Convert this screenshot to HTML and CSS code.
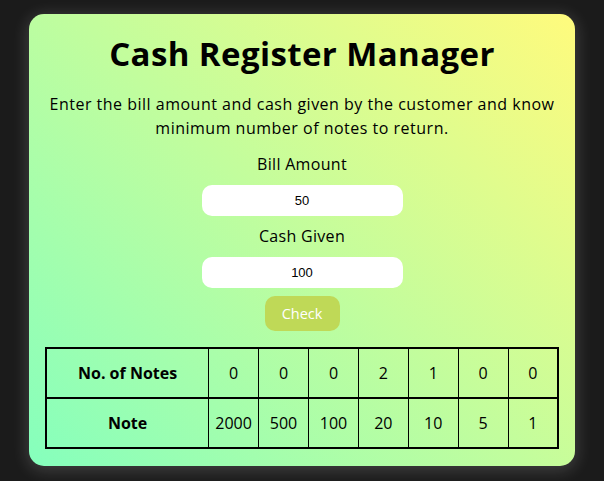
FILE: index.html
```html
<!DOCTYPE html>
<html lang="en">
<head>
<meta charset="utf-8">
<title>Cash Register Manager</title>
<link rel="stylesheet" href="styles.css">
</head>
<body>
<main class="card">
  <h1 class="title">Cash Register Manager</h1>
  <p class="intro">Enter the bill amount and cash given by the customer and know minimum number of notes to return.</p>
  <form class="form">
    <label class="label" for="bill">Bill Amount</label>
    <input class="field" id="bill" type="number" value="50">
    <label class="label" for="cash">Cash Given</label>
    <input class="field" id="cash" type="number" value="100">
    <button class="btn" type="button">Check</button>
  </form>
  <table class="notes">
    <tr class="row-top">
      <th class="head">No. of Notes</th>
      <td>0</td><td>0</td><td>0</td><td>2</td><td>1</td><td>0</td><td>0</td>
    </tr>
    <tr>
      <th class="head">Note</th>
      <td>2000</td><td>500</td><td>100</td><td>20</td><td>10</td><td>5</td><td>1</td>
    </tr>
  </table>
</main>
</body>
</html>
```
FILE: styles.css
```css
* { box-sizing: border-box; }
html, body { margin: 0; padding: 0; }
body {
  background: #1b1b1b;
  font-family: "Open Sans", "Noto Sans", sans-serif;
  color: #000;
  height: 481px;
  overflow: hidden;
}
.card {
  width: 546px;
  margin: 14px auto 0;
  padding: 16px 16px 17px;
  border-radius: 15px;
  background-color: #85ffbd;
  background-image: linear-gradient(45deg, #85ffbd 0%, #fffb7d 100%);
  box-shadow: 0 3px 16px 2px rgba(255, 255, 255, 0.16);
  text-align: center;
}
.title {
  margin: 0;
  font-size: 33px;
  line-height: 48px;
  font-weight: 700;
  letter-spacing: 0.4px;
}
.intro {
  margin: 14px 0 0;
  font-size: 16px;
  line-height: 24px;
  letter-spacing: 0.5px;
}
.form {
  display: flex;
  flex-direction: column;
  align-items: center;
  margin-top: 12px;
}
.label {
  font-size: 16px;
  line-height: 24px;
  letter-spacing: 0.3px;
}
.field {
  width: 201px;
  height: 31px;
  margin: 9px 0 8px;
  border: none;
  border-radius: 10px;
  background: #fff;
  text-align: center;
  font-family: "Liberation Sans", Arial, sans-serif;
  font-size: 13px;
  color: #000;
  -moz-appearance: textfield;
}
.field::-webkit-inner-spin-button,
.field::-webkit-outer-spin-button { -webkit-appearance: none; margin: 0; }
.btn {
  width: 75px;
  height: 35px;
  border: none;
  border-radius: 10px;
  background: #bfd957;
  color: #fff;
  font-family: inherit;
  font-size: 14.5px;
  font-weight: 500;
}
.notes {
  width: 514px;
  margin-top: 16px;
  border-collapse: collapse;
  border: 2px solid #000;
  font-size: 16px;
}
.notes th, .notes td {
  border: 1px solid #000;
  height: 50px;
  padding: 0;
  text-align: center;
  font-weight: 400;
  width: 50px;
}
.notes .head {
  width: 163px;
  font-weight: 700;
}
.row-top th, .row-top td { border-bottom: 2px solid #000; }
```
